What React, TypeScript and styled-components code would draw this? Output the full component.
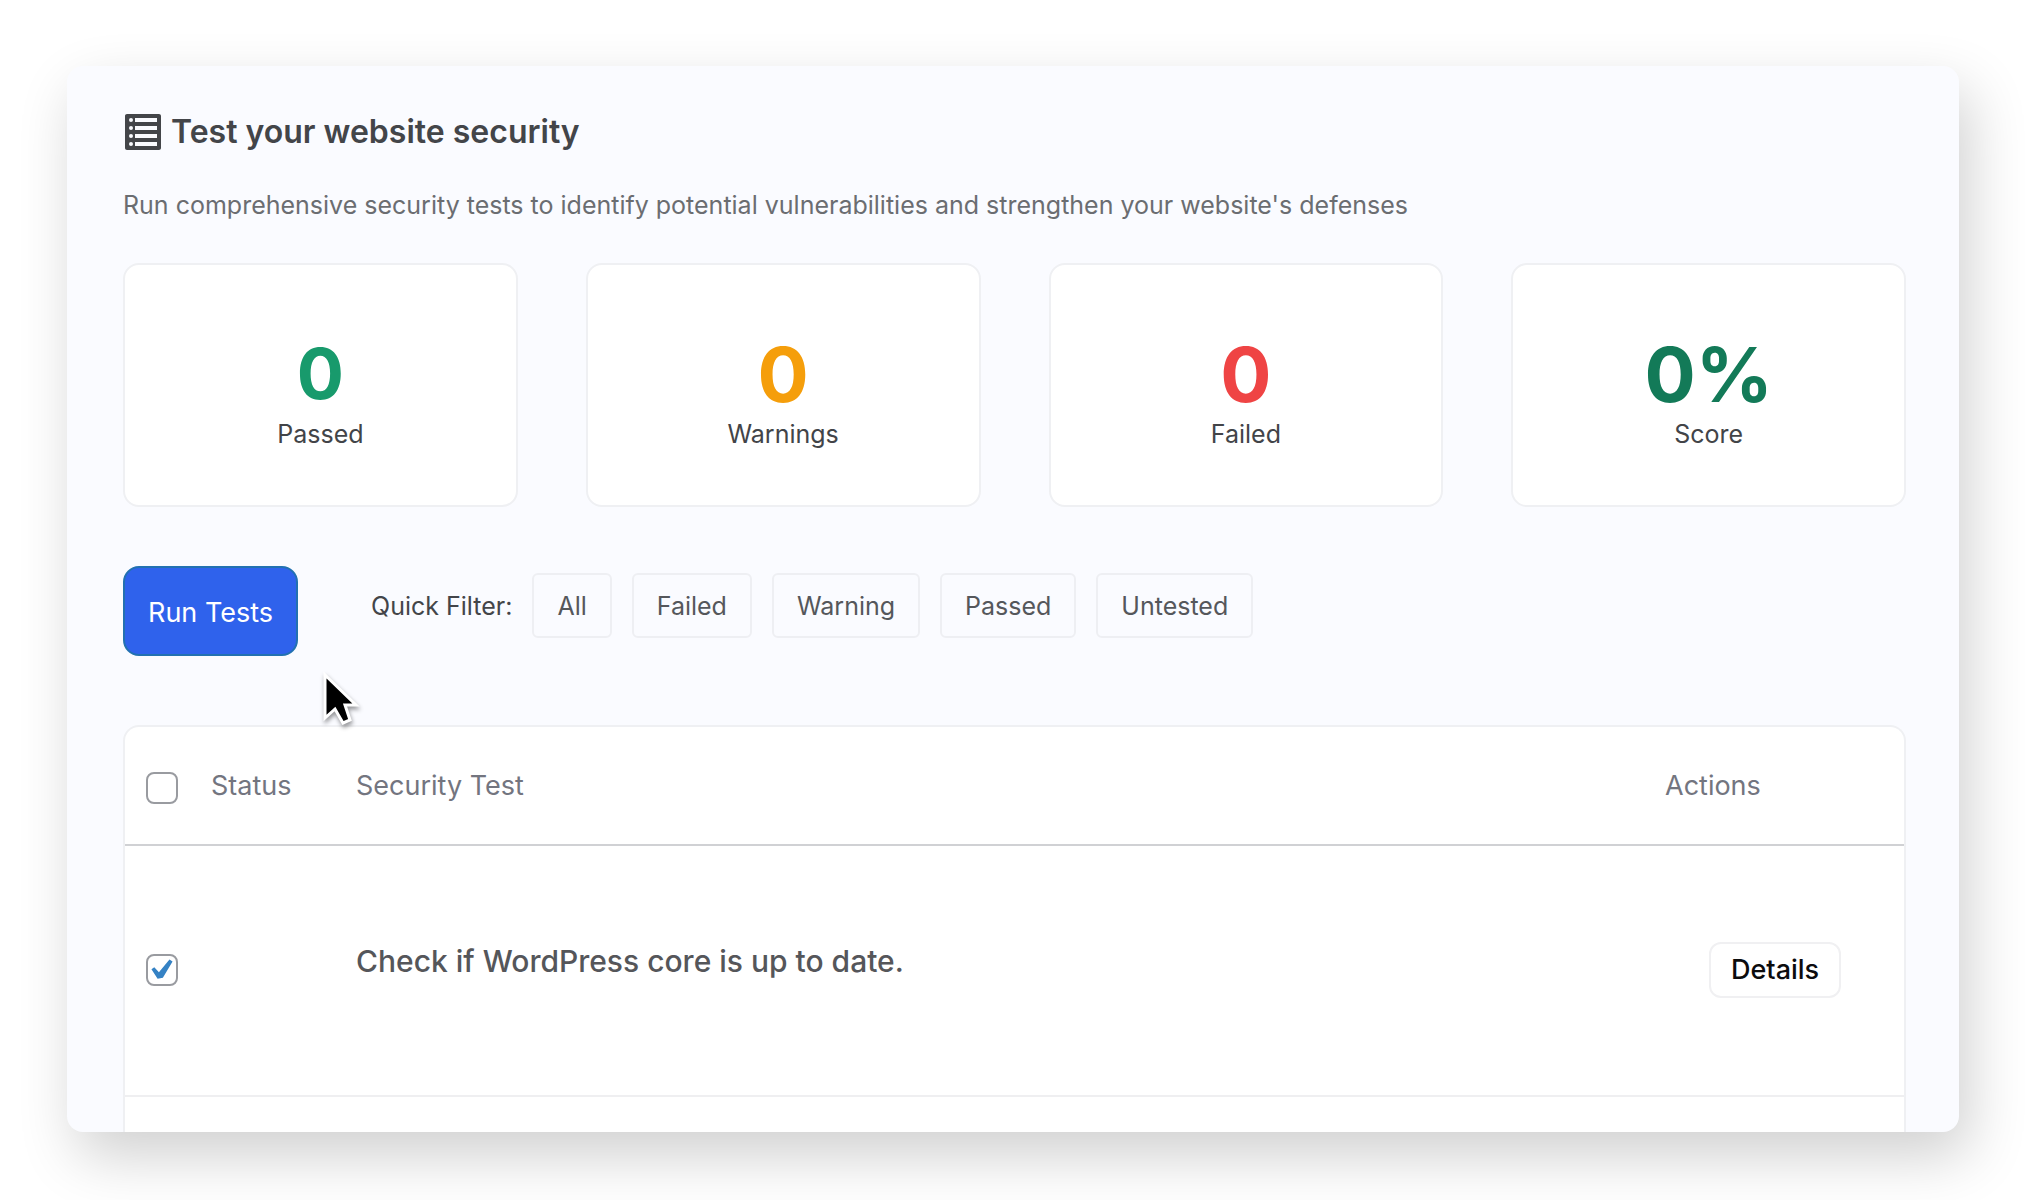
import React, { useState } from "react";
import styled, { createGlobalStyle } from "styled-components";

const GlobalStyle = createGlobalStyle`
  * { box-sizing: border-box; }
  body {
    margin: 0;
    background: #ffffff;
    font-family: Inter, "Liberation Sans", sans-serif;
  }
  button, input { font-family: inherit; }
`;

const Stage = styled.div`
  height: 100vh;
  padding: 66px 67px 68px;
`;

const Panel = styled.main`
  display: flex;
  flex-direction: column;
  height: 100%;
  padding: 46px 53px 0 56px;
  overflow: hidden;
  border-radius: 16px;
  background: #fafbff;
  box-shadow: 10px 24px 58px rgba(0, 0, 0, 0.19);
`;

const Title = styled.h1`
  display: flex;
  align-items: center;
  gap: 8px;
  margin: 0;
  color: #434549;
  font-size: 32px;
  font-weight: 600;
  line-height: 40px;
`;

const TitleIcon = styled.svg`
  width: 40px;
  height: 40px;
  flex: none;
`;

const Subtitle = styled.p`
  margin: 37px 0 0;
  color: #6b6d71;
  font-size: 25px;
  line-height: 32px;
`;

const Stats = styled.section`
  display: grid;
  grid-template-columns: repeat(4, 1fr);
  gap: 68px;
  margin-top: 42px;
`;

const StatCard = styled.div`
  display: flex;
  flex-direction: column;
  align-items: center;
  height: 244px;
  padding-top: 69px;
  border: 2px solid #eff0f3;
  border-radius: 16px;
  background: #ffffff;
`;

const StatValue = styled.div<{ $color: string; $size: number }>`
  color: ${(p) => p.$color};
  font-size: ${(p) => p.$size}px;
  font-weight: 700;
  line-height: 80px;
`;

const StatLabel = styled.div`
  margin-top: 4px;
  color: #424448;
  font-size: 25px;
  line-height: 32px;
`;

const Toolbar = styled.div`
  display: flex;
  align-items: flex-start;
  margin-top: 59px;
`;

const RunButton = styled.button`
  height: 90px;
  padding: 2px 23px 0;
  border: 2px solid #2271b1;
  border-radius: 16px;
  background: #2f62ec;
  color: #ffffff;
  font-size: 27px;
  cursor: pointer;
`;

const Filters = styled.div`
  display: flex;
  align-items: center;
  gap: 20px;
  margin: 7px 0 0 73px;
`;

const FilterLabel = styled.span`
  color: #434549;
  font-size: 25px;
`;

const FilterButton = styled.button`
  height: 65px;
  padding: 0 23px;
  border: 2px solid #eeeff3;
  border-radius: 6px;
  background: transparent;
  color: #55575b;
  font-size: 25px;
  cursor: pointer;
`;

const TableCard = styled.section`
  flex: 1;
  min-height: 0;
  margin-top: 69px;
  border: 2px solid #eff0f3;
  border-bottom: 0;
  border-radius: 16px 16px 0 0;
  background: #ffffff;
`;

const Table = styled.table`
  width: 100%;
  border-collapse: collapse;
  table-layout: fixed;
`;

const CheckCol = styled.col`
  width: 86px;
`;

const StatusCol = styled.col`
  width: 145px;
`;

const ActionsCol = styled.col`
  width: 239px;
`;

const HeadCell = styled.th`
  height: 118px;
  padding: 0;
  border-bottom: 2px solid #d0d1d4;
  color: #73757f;
  font-size: 27px;
  font-weight: 400;
  text-align: left;
`;

const Cell = styled.td`
  height: 251px;
  padding: 0 0 2px;
  border-bottom: 2px solid #efeff1;
`;

const CheckLabel = styled.label<{ $top: number }>`
  display: block;
  width: 32px;
  height: 32px;
  margin: ${(p) => p.$top}px 0 0 21px;
`;

const Checkbox = styled.input`
  display: grid;
  place-items: center;
  width: 32px;
  height: 32px;
  margin: 0;
  appearance: none;
  border: 2px solid #999ba0;
  border-radius: 8px;
  background: #ffffff;

  &:checked::before {
    content: "";
    width: 22px;
    height: 22px;
    background: #3582c4;
    clip-path: polygon(2% 49%, 15% 40%, 36% 62%, 84% 5%, 98% 14%, 54% 88%, 30% 92%);
  }
`;

const TestName = styled.div`
  padding-bottom: 18px;
  color: #55565a;
  font-size: 30px;
  font-weight: 500;
`;

const DetailsButton = styled.button`
  display: block;
  height: 56px;
  margin-left: 44px;
  padding: 0 20px;
  border: 2px solid #f0f0f2;
  border-radius: 12px;
  background: #ffffff;
  color: #0c0c0e;
  font-size: 27px;
  font-weight: 500;
  cursor: pointer;
`;

const Pointer = styled.svg`
  position: absolute;
  left: 320px;
  top: 668px;
  width: 44px;
  height: 64px;
  pointer-events: none;
  filter: drop-shadow(1px 3px 2px rgba(0, 0, 0, 0.4));
`;

const stats = [
  { label: "Passed", value: "0", color: "#189a6c", size: 70 },
  { label: "Warnings", value: "0", color: "#f59e0b", size: 76 },
  { label: "Failed", value: "0", color: "#ef4444", size: 76 },
  { label: "Score", value: "0%", color: "#137a58", size: 76 },
];

const filters = ["All", "Failed", "Warning", "Passed", "Untested"];

export default function App() {
  const [all, setAll] = useState(false);
  const [core, setCore] = useState(true);

  return (
    <>
      <GlobalStyle />
      <Stage>
        <Panel>
          <Title>
            <TitleIcon viewBox="0 0 20 20" aria-hidden="true">
              <path
                fill="currentColor"
                fillRule="evenodd"
                d="M2 19h16c.55 0 1-.45 1-1V2c0-.55-.45-1-1-1H2c-.55 0-1 .45-1 1v16c0 .55.45 1 1 1zM4 3a1 1 0 1 1 0 2 1 1 0 0 1 0-2zm13 0v2H6V3h11zM4 7a1 1 0 1 1 0 2 1 1 0 0 1 0-2zm13 0v2H6V7h11zM4 11a1 1 0 1 1 0 2 1 1 0 0 1 0-2zm13 0v2H6v-2h11zM4 15a1 1 0 1 1 0 2 1 1 0 0 1 0-2zm13 0v2H6v-2h11z"
              />
            </TitleIcon>
            Test your website security
          </Title>
          <Subtitle>
            Run comprehensive security tests to identify potential vulnerabilities and strengthen your website's defenses
          </Subtitle>
          <Stats>
            {stats.map((s) => (
              <StatCard key={s.label}>
                <StatValue $color={s.color} $size={s.size}>{s.value}</StatValue>
                <StatLabel>{s.label}</StatLabel>
              </StatCard>
            ))}
          </Stats>
          <Toolbar>
            <RunButton type="button">Run Tests</RunButton>
            <Filters>
              <FilterLabel>Quick Filter:</FilterLabel>
              {filters.map((f) => (
                <FilterButton key={f} type="button">{f}</FilterButton>
              ))}
            </Filters>
          </Toolbar>
          <TableCard>
            <Table>
              <colgroup>
                <CheckCol />
                <StatusCol />
                <col />
                <ActionsCol />
              </colgroup>
              <thead>
                <tr>
                  <HeadCell>
                    <CheckLabel $top={4}>
                      <Checkbox type="checkbox" aria-label="Select all tests" checked={all} onChange={() => setAll(!all)} />
                    </CheckLabel>
                  </HeadCell>
                  <HeadCell>Status</HeadCell>
                  <HeadCell>Security Test</HeadCell>
                  <HeadCell>Actions</HeadCell>
                </tr>
              </thead>
              <tbody>
                <tr>
                  <Cell>
                    <CheckLabel $top={0}>
                      <Checkbox type="checkbox" aria-label="Select WordPress core test" checked={core} onChange={() => setCore(!core)} />
                    </CheckLabel>
                  </Cell>
                  <Cell />
                  <Cell>
                    <TestName>Check if WordPress core is up to date.</TestName>
                  </Cell>
                  <Cell>
                    <DetailsButton type="button">Details</DetailsButton>
                  </Cell>
                </tr>
              </tbody>
            </Table>
          </TableCard>
        </Panel>
      </Stage>
      <Pointer viewBox="0 0 44 64" aria-hidden="true">
        <path
          d="M5 7V50L15 41L23 55L30 52L25 37H36Z"
          fill="#000000"
          stroke="#ffffff"
          strokeWidth="3"
        />
      </Pointer>
    </>
  );
}
